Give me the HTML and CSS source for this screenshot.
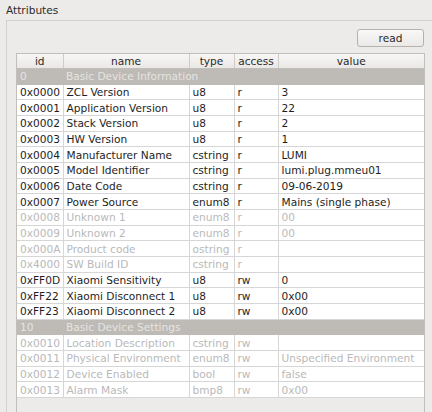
FILE: index.html
```html
<!DOCTYPE html>
<html lang="en">
<head>
    <meta charset="UTF-8">
    <title>Attributes</title>
    <link rel="stylesheet" href="styles.css">
</head>
<body>
    <div class="title">Attributes</div>
    <div class="group">
        <div class="toolbar">
            <button class="read-btn">read</button>
        </div>
        <div class="table-frame">
            <table class="attr-table">
                <colgroup>
                    <col class="c-id">
                    <col class="c-name">
                    <col class="c-type">
                    <col class="c-access">
                    <col>
                </colgroup>
                <thead>
                    <tr>
                        <th>id</th>
                        <th>name</th>
                        <th>type</th>
                        <th>access</th>
                        <th>value</th>
                    </tr>
                </thead>
                <tbody>
                    <tr class="cluster"><td>0</td><td colspan="4">Basic Device Information</td></tr>
                    <tr><td>0x0000</td><td>ZCL Version</td><td>u8</td><td>r</td><td>3</td></tr>
                    <tr><td>0x0001</td><td>Application Version</td><td>u8</td><td>r</td><td>22</td></tr>
                    <tr><td>0x0002</td><td>Stack Version</td><td>u8</td><td>r</td><td>2</td></tr>
                    <tr><td>0x0003</td><td>HW Version</td><td>u8</td><td>r</td><td>1</td></tr>
                    <tr><td>0x0004</td><td>Manufacturer Name</td><td>cstring</td><td>r</td><td>LUMI</td></tr>
                    <tr><td>0x0005</td><td>Model Identifier</td><td>cstring</td><td>r</td><td>lumi.plug.mmeu01</td></tr>
                    <tr><td>0x0006</td><td>Date Code</td><td>cstring</td><td>r</td><td>09-06-2019</td></tr>
                    <tr><td>0x0007</td><td>Power Source</td><td>enum8</td><td>r</td><td>Mains (single phase)</td></tr>
                    <tr class="off"><td>0x0008</td><td>Unknown 1</td><td>enum8</td><td>r</td><td>00</td></tr>
                    <tr class="off"><td>0x0009</td><td>Unknown 2</td><td>enum8</td><td>r</td><td>00</td></tr>
                    <tr class="off"><td>0x000A</td><td>Product code</td><td>ostring</td><td>r</td><td></td></tr>
                    <tr class="off"><td>0x4000</td><td>SW Build ID</td><td>cstring</td><td>r</td><td></td></tr>
                    <tr><td>0xFF0D</td><td>Xiaomi Sensitivity</td><td>u8</td><td>rw</td><td>0</td></tr>
                    <tr><td>0xFF22</td><td>Xiaomi Disconnect 1</td><td>u8</td><td>rw</td><td>0x00</td></tr>
                    <tr><td>0xFF23</td><td>Xiaomi Disconnect 2</td><td>u8</td><td>rw</td><td>0x00</td></tr>
                    <tr class="cluster"><td>10</td><td colspan="4">Basic Device Settings</td></tr>
                    <tr class="off"><td>0x0010</td><td>Location Description</td><td>cstring</td><td>rw</td><td></td></tr>
                    <tr class="off"><td>0x0011</td><td>Physical Environment</td><td>enum8</td><td>rw</td><td>Unspecified Environment</td></tr>
                    <tr class="off"><td>0x0012</td><td>Device Enabled</td><td>bool</td><td>rw</td><td>false</td></tr>
                    <tr class="off"><td>0x0013</td><td>Alarm Mask</td><td>bmp8</td><td>rw</td><td>0x00</td></tr>
                </tbody>
            </table>
        </div>
    </div>
</body>
</html>
```

FILE: styles.css
```css
html, body {
    margin: 0;
    height: 100%;
    overflow: hidden;
}
body {
    background: #edebe9;
    font-family: "DejaVu Sans", sans-serif;
    font-size: 10.6px;
    color: #1e1e1e;
}
.title {
    padding: 3px 0 0 6px;
    height: 17px;
    line-height: 14px;
    color: #2c2c2c;
}
.group {
    margin-left: 6px;
    width: 440px;
    height: 400px;
    border-top: 1px solid #d4d1cd;
    border-left: 1px solid #d4d1cd;
    padding: 8px 0 0 9px;
    display: flex;
    flex-direction: column;
    box-sizing: border-box;
}
.toolbar {
    width: 408px;
    display: flex;
    justify-content: flex-end;
    margin-bottom: 6px;
}
.read-btn {
    width: 67px;
    height: 18px;
    padding: 0;
    font-family: inherit;
    font-size: 10.6px;
    color: #2a2a2a;
    background: linear-gradient(#f9f8f7, #ebe9e7);
    border: 1px solid #b5b1ad;
    border-radius: 3px;
}
.table-frame {
    width: 409px;
    flex: 1;
    border: 1px solid #c2bfbb;
    border-bottom: none;
    box-sizing: border-box;
}
.attr-table {
    width: 407px;
    table-layout: fixed;
    border-collapse: collapse;
}
.c-id { width: 46px; }
.c-name { width: 126px; }
.c-type { width: 45px; }
.c-access { width: 44px; }
.attr-table th {
    height: 14px;
    padding: 0;
    font-weight: normal;
    color: #2a2a2a;
    background: linear-gradient(#f7f6f5, #eae8e6);
    border-right: 1px solid #cfccc8;
    border-bottom: 1px solid #c2bfbb;
    white-space: nowrap;
    overflow: hidden;
}
.attr-table th:last-child {
    border-right: none;
}
.attr-table td {
    height: 14.68px;
    padding: 0 0 0 3px;
    background: #ffffff;
    border-right: 1px solid #d6d6d6;
    border-bottom: 1px solid #d6d6d6;
    white-space: nowrap;
    overflow: hidden;
}
.attr-table td:last-child {
    border-right: none;
}
.attr-table tr.off td {
    color: #b9b9b9;
}
.attr-table tr.cluster td {
    background: #bebab6;
    color: #e6e4e1;
    border-right: none;
    border-bottom-color: #bebab6;
}
```
